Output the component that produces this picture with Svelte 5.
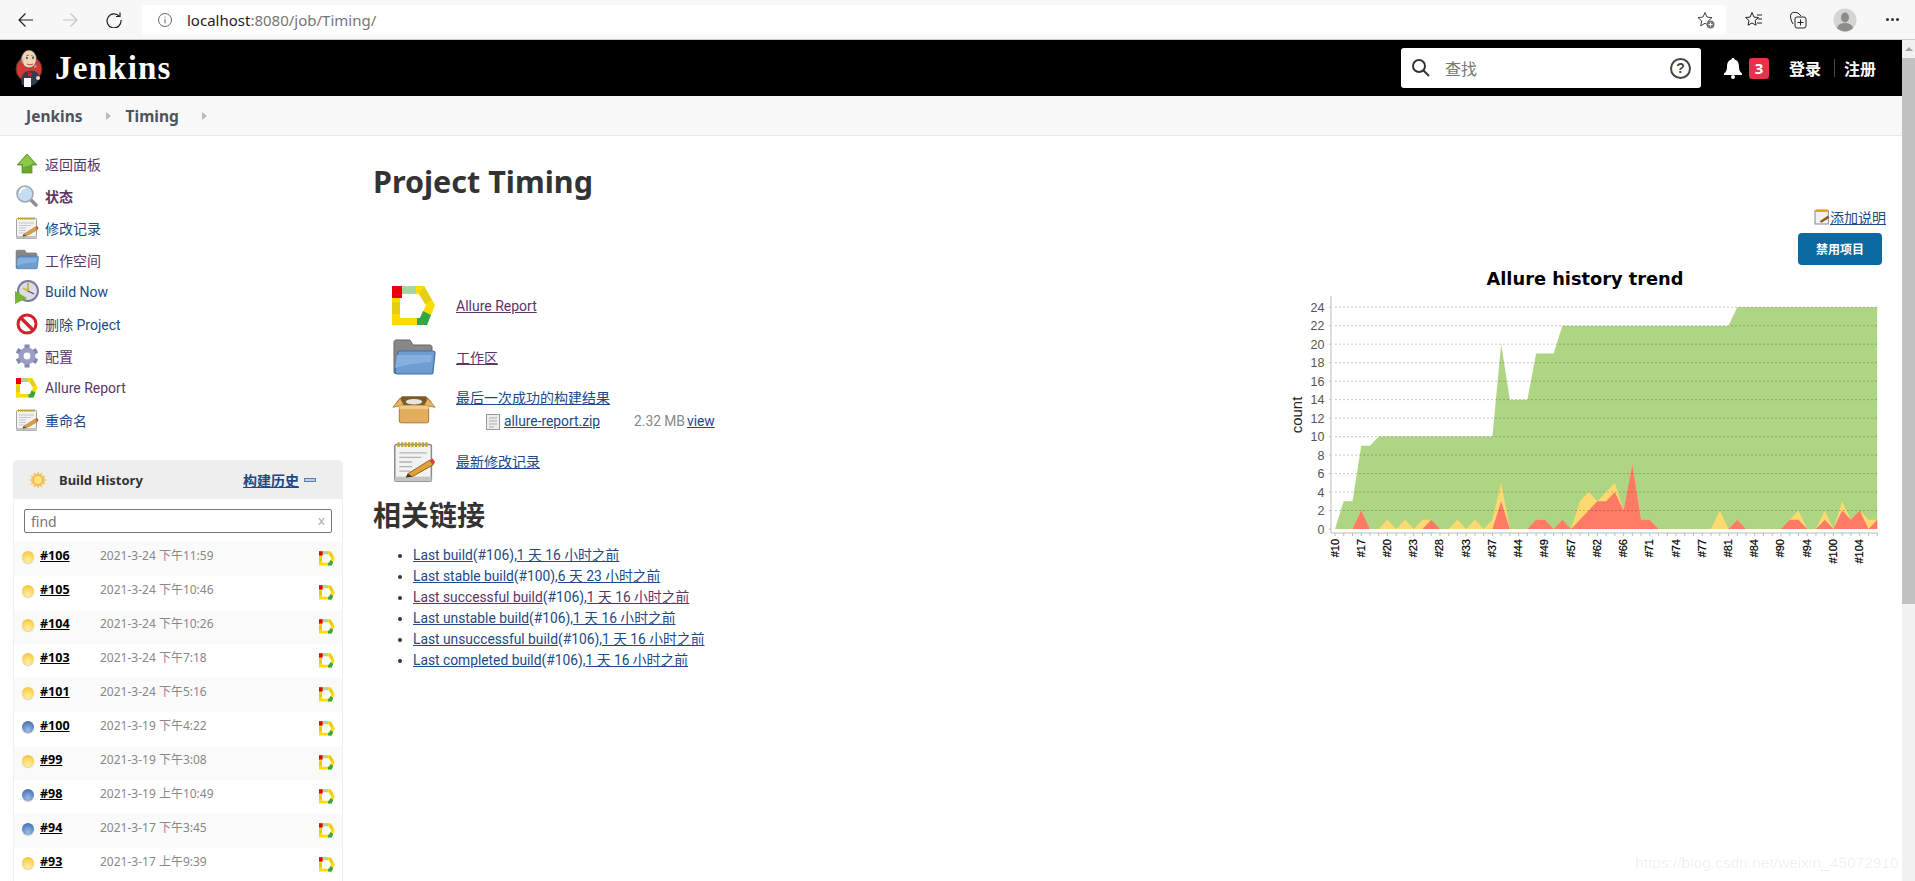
<script>
  const tasks = [
    { icon: "up", label: "返回面板", visited: true },
    { icon: "search", label: "状态", visited: true, bold: true },
    { icon: "notes", label: "修改记录" },
    { icon: "folder", label: "工作空间", visited: true },
    { icon: "clock", label: "Build Now" },
    { icon: "stop", label: "删除 Project" },
    { icon: "gear", label: "配置", visited: true },
    { icon: "allure", label: "Allure Report", visited: true },
    { icon: "notes", label: "重命名" },
  ];

  const builds = [
    ["#106", "2021-3-24 下午11:59", "yellow"],
    ["#105", "2021-3-24 下午10:46", "yellow"],
    ["#104", "2021-3-24 下午10:26", "yellow"],
    ["#103", "2021-3-24 下午7:18", "yellow"],
    ["#101", "2021-3-24 下午5:16", "yellow"],
    ["#100", "2021-3-19 下午4:22", "blue"],
    ["#99", "2021-3-19 下午3:08", "yellow"],
    ["#98", "2021-3-19 上午10:49", "blue"],
    ["#94", "2021-3-17 下午3:45", "blue"],
    ["#93", "2021-3-17 上午9:39", "yellow"],
  ];

  const permalinks = [
    ["Last build", "(#106),", "1 天 16 小时之前"],
    ["Last stable build", "(#100),", "6 天 23 小时之前"],
    ["Last successful build", "(#106),", "1 天 16 小时之前", true],
    ["Last unstable build", "(#106),", "1 天 16 小时之前"],
    ["Last unsuccessful build", "(#106),", "1 天 16 小时之前"],
    ["Last completed build", "(#106),", "1 天 16 小时之前"],
  ];

  // trend chart data, one value per build
  const total = [0, 3, 3, 9, 9, 10, 10, 10, 10, 10, 10, 10, 10, 10, 10, 10, 10, 10, 10, 20, 14, 14, 14, 19, 19, 19, 22, 22, 22, 22, 22, 22, 22, 22, 22, 22, 22, 22, 22, 22, 22, 22, 22, 22, 22, 22, 24, 24, 24, 24, 24, 24, 24, 24, 24, 24, 24, 24, 24, 24, 24, 24, 24];
  const broken = [0, 0, 0, 2, 0, 0, 1, 0, 1, 0, 1, 1, 0, 0, 1, 0, 1, 0, 1, 5, 0, 0, 0, 1, 1, 0, 1, 0, 3, 4, 3, 4, 5, 2, 7, 1, 1, 0, 0, 0, 0, 0, 0, 0, 2, 0, 1, 0, 0, 0, 0, 0, 1, 2, 0, 0, 2, 0, 3, 1, 2, 1, 1];
  const failed = [0, 0, 0, 2, 0, 0, 0, 0, 0, 0, 0, 1, 0, 0, 0, 0, 0, 0, 0, 3, 0, 0, 0, 1, 1, 0, 1, 0, 1, 2, 3, 3, 4, 2, 7, 1, 1, 0, 0, 0, 0, 0, 0, 0, 0, 0, 1, 0, 0, 0, 0, 0, 1, 1, 0, 0, 1, 0, 2, 1, 2, 0, 1];
  const xLabels = ["#10", "#17", "#20", "#23", "#28", "#33", "#37", "#44", "#49", "#57", "#62", "#66", "#71", "#74", "#77", "#81", "#84", "#90", "#94", "#100", "#104"];
  const levels = [24, 22, 20, 18, 16, 14, 12, 10, 8, 6, 4, 2, 0];

  const px = (i) => 1335 + i * 8.745;
  const py = (v) => 529 - v * 9.24;
  const area = (values) =>
    `M${px(0)} ${py(0)} ` + values.map((v, i) => `L${px(i)} ${py(v)}`).join(" ") + ` L${px(62)} ${py(0)} Z`;
</script>

{#snippet allure(w, h)}
  <svg width={w} height={h} viewBox="0 0 44 40" class="ic">
    <path d="M0 0H32L43 19 35 39H0Z M8 8V32H28L34 19 27 8Z" fill="#ffdc00" fill-rule="evenodd" />
    <path d="M0 16H8V28H0z" fill="#e6cd10" />
    <path d="M27 8L32 0 40 14 33 18z" fill="#e6cd18" />
    <path d="M10 0H24V8H10z" fill="#a9d6a0" />
    <path d="M0 0H10V12H0z" fill="#e8000f" />
    <path d="M25 39V32H28L31 25 39 29 35 39z" fill="#33a64a" />
  </svg>
{/snippet}

{#snippet notes(w, h)}
  <svg width={w} height={h} viewBox="0 0 48 48" class="ic">
    <rect x="3" y="5" width="40" height="40" rx="2" fill="#f2f2f2" stroke="#8a8a8a" stroke-width="1.6" />
    <rect x="3" y="40" width="40" height="5" fill="#c4c4c4" />
    <path d="M6 5h34" stroke="#c5a520" stroke-width="5" stroke-dasharray="2.4 1.4" />
    <path d="M8 14h30M8 19h24M8 24h14M8 29h14M8 34h12" stroke="#b4b4b4" stroke-width="1.4" />
    <path d="M17 37l24-15 4 5-23 13z" fill="#e0a03a" stroke="#8a5c14" stroke-width="1" />
    <path d="M41 22l3-2 3 4-2 3z" fill="#d8443a" />
    <path d="M17 37l5 3-7 1z" fill="#3a3020" />
  </svg>
{/snippet}

{#snippet folder(w, h)}
  <svg width={w} height={h} viewBox="0 0 44 38" class="ic">
    <path d="M2 34V3c0-1 1-2 2-2h14l3 5h17c1 0 2 1 2 2v6H10L6 34z" fill="#888" stroke="#666" />
    <path d="M3 33L6 12h35c1 0 2 1 2 2l-2 19c0 1-1 2-2 2H5c-1 0-2-1-2-2z" fill="#6f9dd2" stroke="#3d6ea6" stroke-width="1.2" />
    <path d="M5 16h35l-1 7c-12 1-24 2-36 6z" fill="#86b0de" />
  </svg>
{/snippet}

{#snippet box(w, h)}
  <svg width={w} height={h} viewBox="0 0 48 34" class="ic">
    <path d="M8 12h32l3-4-6-6H11L5 8z" fill="#7d5a2a" />
    <ellipse cx="24" cy="8" rx="9" ry="3" fill="#e6e6e0" />
    <path d="M1 14L9 4 13 12zM47 14L39 4l-4 8z" fill="#e8b461" stroke="#9c6c26" stroke-width=".8" />
    <rect x="8" y="12" width="32" height="19" rx="2" fill="#e3ad60" stroke="#a2722a" />
    <rect x="8" y="12" width="32" height="4" fill="#f0cb8a" />
  </svg>
{/snippet}

{#snippet taskIcon(name)}
  {#if name === "up"}
    <svg width="24" height="24" viewBox="0 0 24 24" class="ic">
      <path d="M12 2L22 13h-5v8H7v-8H2z" fill="#6aa82e" stroke="#5b9626" stroke-width=".8" />
      <path d="M12 3L4 12h4v3c4-1 8-2 11-4z" fill="#8cc84a" />
    </svg>
  {:else if name === "search"}
    <svg width="24" height="24" viewBox="0 0 24 24" class="ic">
      <path d="M15 15l6 6" stroke="#8c8c8c" stroke-width="3.4" stroke-linecap="round" />
      <circle cx="10" cy="10" r="8" fill="#c4dcf4" stroke="#a4a8ae" stroke-width="1.6" />
      <path d="M5 9a5 5 0 0 1 5-5" stroke="#fff" stroke-width="2" fill="none" />
    </svg>
  {:else if name === "notes"}
    {@render notes(24, 24)}
  {:else if name === "folder"}
    {@render folder(24, 22)}
  {:else if name === "clock"}
    <svg width="24" height="24" viewBox="0 0 24 24" class="ic">
      <circle cx="13" cy="11" r="10" fill="#dcdce6" stroke="#7a7a9c" stroke-width="2" />
      <path d="M13 3v8l-5-3" stroke="#c9b64a" stroke-width="2" fill="none" />
      <path d="M13 11l6 3" stroke="#555" stroke-width="1.2" />
      <path d="M0 11l12 7L0 24z" fill="#79b530" />
    </svg>
  {:else if name === "stop"}
    <svg width="24" height="24" viewBox="0 0 24 24" class="ic">
      <circle cx="12" cy="12" r="9" fill="#fff" stroke="#d2232a" stroke-width="3" />
      <path d="M6 6l12 12" stroke="#d2232a" stroke-width="3.4" />
    </svg>
  {:else if name === "gear"}
    <svg width="24" height="24" viewBox="0 0 24 24" class="ic">
      {#each [0, 60, 120, 180, 240, 300] as a}
        <rect x="9.500" y="0.500" width="5" height="6" fill="#8287b0" transform="rotate({a} 12 12)" />
      {/each}
      <circle cx="12" cy="12" r="8.500" fill="#9a9ec4" />
      <circle cx="12" cy="12" r="3.400" fill="#fff" />
    </svg>
  {:else}
    {@render allure(22, 20)}
  {/if}
{/snippet}

<div class="page">
  <div class="chrome">
    <div class="nav">
      <svg width="16" height="16" viewBox="0 0 16 16" fill="none" stroke="#222" stroke-width="1.2"><path d="M15 8H1M7.500 1.500L1 8l6.500 6.500" /></svg>
      <svg width="16" height="16" viewBox="0 0 16 16" fill="none" stroke="#c4c4c4" stroke-width="1.2"><path d="M1 8h14M8.500 1.500L15 8l-6.500 6.500" /></svg>
      <svg width="16" height="16" viewBox="0 0 16 16" fill="none" stroke="#222" stroke-width="1.2"><path d="M13.500 4.500A7 7 0 1 0 15 8" /><path d="M10 4.500h4V.5" /></svg>
    </div>
    <div class="address">
      <svg width="16" height="16" viewBox="0 0 16 16" fill="none" stroke="#666"><circle cx="8" cy="8" r="6.500" /><path d="M8 7v4.500M8 4.500v1" /></svg>
      <span class="url"><b>localhost</b>:8080/job/Timing/</span>
      <svg class="addr-star" width="18" height="18" viewBox="0 0 18 18"><path d="M8 1.500l2 4.600 5 .5-3.700 3.300 1 4.900L8 12.300 3.700 14.800l1-4.900L1 6.600l5-.5z" fill="none" stroke="#444" /><circle cx="13.500" cy="13.500" r="4" fill="#777" /><path d="M11.500 13.500h4M13.500 11.500v4" stroke="#fff" /></svg>
    </div>
    <div class="tools">
      <svg width="18" height="18" viewBox="0 0 18 18" fill="none" stroke="#222"><path d="M7 1.500l2 4.600 4.500.4-3.400 3 1 4.700L7 12 3 14.200l1-4.700-3.400-3 4.500-.4z" /><path d="M12 4h5M13 8h4M12 12h5" /></svg>
      <svg width="18" height="18" viewBox="0 0 18 18" fill="none" stroke="#222"><path d="M4 13C1.500 9 1 5 2 3c1-2 4-2 7-1l3 3" /><rect x="6" y="6" width="11" height="11" rx="2" /><path d="M11.500 8.500v6M8.500 11.500h6" /></svg>
      <svg width="24" height="24" viewBox="0 0 24 24"><circle cx="12" cy="12" r="11.500" fill="#d4d4d0" /><ellipse cx="12" cy="9.500" rx="4" ry="5" fill="#8c8c88" /><path d="M4 20c1-4 5-5 8-5s7 1 8 5a11 11 0 0 1-16 0z" fill="#8c8c88" /></svg>
      <span class="dots"></span>
    </div>
  </div>

  <div class="viewport">
    <div class="content">
      <header class="head">
        <svg class="logo" width="28" height="38" viewBox="0 0 28 38">
          <circle cx="14" cy="20" r="13" fill="#d33833" stroke="#49312c" />
          <path d="M7 36c-2-7 0-13 7-14s10 3 11 7c-2 4-5 7-9 8z" fill="#2c3e50" />
          <path d="M13 23l4 1-1 4-3-1z" fill="#c22" />
          <ellipse cx="14" cy="10" rx="7.500" ry="9" fill="#f0d6b7" stroke="#49312c" stroke-width=".6" />
          <path d="M7 14c-1-3-1-5 0-7l2 8zM20 15l2 3-3 1z" fill="#aaa" />
          <circle cx="12" cy="9" r=".9" fill="#333" /><circle cx="18" cy="9" r=".9" fill="#333" />
          <path d="M11 7l3-1M16 6.500l3 1" stroke="#555" stroke-width=".7" />
          <path d="M12 15q3 2 6 0" stroke="#944" fill="none" stroke-width=".9" />
          <path d="M9 29h7v9H9z" fill="#fff" />
          <circle cx="23" cy="29" r="2" fill="#f0d6b7" />
        </svg>
        <span class="brand">Jenkins</span>
        <div class="head-right">
          <div class="searchbox">
            <svg width="20" height="20" viewBox="0 0 20 20" fill="none" stroke="#333" stroke-width="2"><circle cx="8" cy="8" r="6" /><path d="M12.500 12.500L18 18" /></svg>
            <span class="placeholder">查找</span>
            <span class="help">?</span>
          </div>
          <svg class="bell" width="18" height="22" viewBox="0 0 18 22"><path d="M9 1c1 0 1.500 .7 1.500 1.600C14 3.500 15 6.500 15 10c0 3 1 5 3 6.500V18H0v-1.500C2 15 3 13 3 10c0-3.500 1-6.500 4.500-7.400C7.500 1.700 8 1 9 1z" fill="#fff" /><circle cx="9" cy="20" r="2" fill="#fff" /></svg>
          <span class="badge">3</span>
          <a class="login">登录</a>
          <span class="sep"></span>
          <a class="login">注册</a>
        </div>
      </header>

      <nav class="crumbs">
        <span class="crumb">Jenkins</span>
        <span class="arrow"></span>
        <span class="crumb">Timing</span>
        <span class="arrow"></span>
      </nav>

      <div class="columns">
        <aside class="side">
          <ul class="tasks">
            {#each tasks as t}
              <li class="task">
                <span class="task-icon">{@render taskIcon(t.icon)}</span>
                <span class:visited={t.visited} class:bold={t.bold}>{t.label}</span>
              </li>
            {/each}
          </ul>

          <section class="history">
            <div class="history-head">
              <svg width="18" height="18" viewBox="0 0 18 18">
                <path d="M9 0l1.500 3 3-1.500-.5 3.500 3.500-.5-1.500 3 3 1.500-3 1.500 1.500 3-3.500-.5.5 3.500-3-1.500L9 18l-1.500-3-3 1.500.5-3.500-3.500.5 1.500-3L0 9l3-1.500L1.500 4.500 5 5l-.5-3.500 3 1.500z" fill="#fbc66a" />
                <circle cx="9" cy="9" r="4.600" fill="#ffe680" stroke="#eea93a" />
              </svg>
              <span class="history-title">Build History</span>
              <a class="trend">构建历史</a>
              <span class="minus"></span>
            </div>
            <div class="find">
              <div class="find-input">find<span class="clear">x</span></div>
            </div>
            {#each builds as b}
              <div class="build">
                <span class="ball {b[2]}"></span>
                <a class="num">{b[0]}</a>
                <span class="date">{b[1]}</span>
                <span class="build-icon">{@render allure(16, 15)}</span>
              </div>
            {/each}
          </section>
        </aside>

        <main class="main">
          <div class="summary">
            <h1>Project Timing</h1>
            <div class="main-links">
              <div class="mi">{@render allure(44, 40)}</div>
              <div class="ml"><a class="visited">Allure Report</a></div>
              <div class="mi">{@render folder(44, 38)}</div>
              <div class="ml"><a class="visited">工作区</a></div>
              <div class="mi">{@render box(48, 34)}</div>
              <div class="ml">
                <a>最后一次成功的构建结果</a>
                <div class="artifact">
                  <svg width="14" height="16" viewBox="0 0 14 16"><rect x=".5" y=".5" width="13" height="15" fill="#eee" stroke="#999" /><path d="M3 4h8M3 7h8M3 10h8M3 13h5" stroke="#aaa" /></svg>
                  <a class="zip">allure-report.zip</a>
                  <span class="size">2.32 MB</span>
                  <a>view</a>
                </div>
              </div>
              <div class="mi">{@render notes(44, 44)}</div>
              <div class="ml"><a>最新修改记录</a></div>
            </div>
            <h2>相关链接</h2>
            <ul class="perma">
              {#each permalinks as p}
                <li><a class:visited={p[3]}>{p[0]}</a><span class="plain" class:visited={p[3]}>{p[1]}</span><a class:visited={p[3]}>{p[2]}</a></li>
              {/each}
            </ul>
          </div>

          <div class="right">
            <div class="describe">
              <svg width="16" height="16" viewBox="0 0 48 48"><rect x="3" y="5" width="40" height="40" fill="#f2f2f2" stroke="#888" stroke-width="3" /><path d="M6 5h34" stroke="#e0a818" stroke-width="8" /><path d="M17 37l24-17 6 6-25 15z" fill="#8a5c14" /></svg>
              <a>添加说明</a>
            </div>
            <button class="disable">禁用项目</button>
            <svg class="chart" width="620" height="300" viewBox="1270 268 620 300">
              <text x="1585" y="285" class="chart-title" text-anchor="middle">Allure history trend</text>
              <path d={area(total)} fill="#aed582" />
              <path d={area(broken)} fill="#ffd970" />
              <path d={area(failed)} fill="#fd7b65" />
              <path d="M1331 296V533H1878" fill="none" stroke="#bbb" />
              {#each levels as v}
                {#if v}
                  <path d="M1335 {py(v)}H1877" class="grid" />
                {/if}
                <path d="M1329 {py(v)}H1331" stroke="#bbb" />
                <text x="1324.500" y={py(v) + 4.500} class="y-label" text-anchor="end">{v}</text>
              {/each}
              {#each total as _, i}
                <path d="M{px(i)} 533v3" stroke="#bbb" />
              {/each}
              {#each xLabels as l, i}
                <text x={px(i * 3) + 3.500} y="539" class="x-label" text-anchor="end" transform="rotate(-90 {px(i * 3) + 3.500} 539)">{l}</text>
              {/each}
              <text x="1302" y="415" class="count" text-anchor="middle" transform="rotate(-90 1302 415)">count</text>
            </svg>
          </div>
        </main>
      </div>
    </div>

    <div class="scrollbar">
      <span class="up"></span>
      <span class="thumb"></span>
    </div>
  </div>

  <span class="watermark">https://blog.csdn.net/weixin_45072910</span>
</div>

<style>
  :global(body) {
    margin: 0;
    background: #fff;
  }

  .page {
    position: relative;
    width: 1915px;
    height: 881px;
    overflow: hidden;
    font-family: "Noto Sans", "Noto Sans CJK SC", sans-serif;
    font-size: 13px;
    color: #333;
  }

  a {
    color: #204a87;
    text-decoration: underline;
  }

  .visited,
  a.visited {
    color: #5c3566;
  }

  .ic {
    display: block;
  }

  /* browser bar */
  .chrome {
    height: 39px;
    background: #f7f7f7;
    border-bottom: 1px solid #ccc;
    display: flex;
    align-items: center;
  }

  .nav {
    width: 142px;
    padding-left: 18px;
    box-sizing: border-box;
    display: flex;
    gap: 28px;
  }

  .address {
    width: 1584px;
    height: 30px;
    background: #fff;
    border-radius: 4px;
    display: flex;
    align-items: center;
    padding-left: 15px;
    box-sizing: border-box;
  }

  .url {
    margin-left: 14px;
    font-size: 15px;
    color: #767676;
  }

  .url b {
    font-weight: 400;
    color: #222;
  }

  .addr-star {
    margin-left: auto;
    margin-right: 11px;
  }

  .tools {
    flex: 1;
    display: flex;
    align-items: center;
    padding-left: 19px;
    gap: 26px;
  }

  .dots {
    width: 3px;
    height: 3px;
    margin-left: 8px;
    border-radius: 50%;
    background: #333;
    box-shadow: 5px 0 #333, -5px 0 #333;
  }

  /* page */
  .viewport {
    display: flex;
    height: 842px;
  }

  .content {
    flex: 1;
    min-width: 0;
  }

  .scrollbar {
    width: 13px;
    background: #f1f1f1;
    display: flex;
    flex-direction: column;
    align-items: center;
  }

  .up {
    margin-top: 7px;
    border: 4px solid transparent;
    border-top: 0;
    border-bottom: 4px solid #a3a3a3;
  }

  .thumb {
    width: 100%;
    margin-top: 7px;
    height: 546px;
    background: #c1c1c1;
  }

  .head {
    height: 56px;
    background: #000;
    display: flex;
    align-items: center;
    padding-left: 15px;
    padding-right: 26px;
  }

  .brand {
    margin-left: 12px;
    font-family: "Liberation Serif", serif;
    font-weight: 700;
    font-size: 33px;
    color: #fff;
    letter-spacing: 1.2px;
  }

  .head-right {
    margin-left: auto;
    display: flex;
    align-items: center;
  }

  .searchbox {
    width: 300px;
    height: 40px;
    box-sizing: border-box;
    background: #fff;
    border-radius: 3px;
    display: flex;
    align-items: center;
    padding: 0 10px 0 10px;
  }

  .placeholder {
    margin-left: 14px;
    font-size: 16px;
    color: #777;
  }

  .help {
    margin-left: auto;
    width: 17px;
    height: 17px;
    border: 2px solid #444;
    border-radius: 50%;
    text-align: center;
    font: 700 14px/17px "Liberation Sans", sans-serif;
    color: #444;
  }

  .bell {
    margin-left: 23px;
  }

  .badge {
    margin-left: 7px;
    width: 20px;
    height: 21px;
    background: #e6324b;
    border-radius: 3px;
    color: #fff;
    font-weight: 700;
    font-size: 15px;
    line-height: 21px;
    text-align: center;
  }

  .login {
    margin-left: 20px;
    font-size: 16px;
    font-weight: 700;
    color: #fff;
    text-decoration: none;
  }

  .sep {
    width: 1px;
    height: 18px;
    margin-left: 13px;
    margin-right: -11px;
    background: #444;
  }

  .crumbs {
    height: 39px;
    background: #f8f8f8;
    border-bottom: 1px solid #e8e8e8;
    display: flex;
    align-items: center;
    padding-left: 26px;
  }

  .crumb {
    font-size: 15.500px;
    font-weight: 700;
    color: #4d545d;
  }

  .arrow {
    margin: 0 15px 0 23px;
    border: 4px solid transparent;
    border-left: 5px solid #bbb;
    border-right: 0;
  }

  .columns {
    display: flex;
  }

  /* left side */
  .side {
    width: 360px;
    flex-shrink: 0;
    padding: 12px 0 0 13px;
    box-sizing: border-box;
  }

  .tasks {
    list-style: none;
    margin: 0;
    padding: 0;
  }

  .task {
    height: 32px;
    display: flex;
    align-items: center;
    font-family: Roboto, "Noto Sans CJK SC", sans-serif;
    font-size: 14px;
    color: #204a87;
  }

  .task-icon {
    width: 32px;
    display: flex;
    justify-content: center;
    padding-right: 4px;
    box-sizing: border-box;
  }

  .bold {
    font-weight: 700;
  }

  .history {
    width: 330px;
    margin-top: 24px;
    box-sizing: border-box;
    border: 1px solid #f0f0f0;
    border-top: 0;
    border-radius: 4px 4px 0 0;
  }

  .history-head {
    height: 39px;
    background: #eee;
    display: flex;
    align-items: center;
    padding-left: 15px;
    border-radius: 4px 4px 0 0;
  }

  .history-title {
    margin-left: 12px;
    font-weight: 700;
    font-size: 13px;
    color: #333;
  }

  .trend {
    margin-left: auto;
    font-size: 14px;
    font-weight: 700;
  }

  .minus {
    width: 10px;
    height: 2px;
    margin: 0 26px 0 5px;
    background: #b9d0ea;
    border: 1px solid #5a7fb0;
  }

  .find {
    height: 43px;
    padding: 10px 10px 0;
    box-sizing: border-box;
  }

  .find-input {
    height: 24px;
    box-sizing: border-box;
    border: 1px solid #767676;
    border-radius: 2px;
    padding: 0 6px;
    font-size: 14px;
    line-height: 24px;
    color: #777;
    display: flex;
    justify-content: space-between;
  }

  .clear {
    font-size: 13px;
    line-height: 20px;
    color: #aaa;
  }

  .build {
    height: 34px;
    display: flex;
    align-items: flex-start;
    padding: 4px 7px 0 8px;
    box-sizing: border-box;
    line-height: 20px;
  }

  .build:nth-of-type(odd) {
    background: #fafafa;
  }

  .ball {
    width: 12px;
    height: 12px;
    margin-top: 5px;
    border-radius: 50%;
    flex-shrink: 0;
    box-shadow: 0 1px 1px #ccc;
  }

  .ball.yellow {
    background: radial-gradient(circle at 50% 75%, #fff0a0, #fcd45a 55%, #eeb63c);
  }

  .ball.blue {
    background: radial-gradient(circle at 50% 75%, #9dbde6, #5f88c4 55%, #33609e);
  }

  .num {
    width: 60px;
    margin-left: 6px;
    font-size: 12.500px;
    font-weight: 700;
    color: #000;
    flex-shrink: 0;
    text-decoration-skip-ink: none;
  }

  .date {
    font-size: 12px;
    color: #888;
  }

  .build-icon {
    margin-left: auto;
    margin-top: 5px;
  }

  /* main */
  .main {
    flex: 1;
    min-width: 0;
    display: flex;
    justify-content: space-between;
    padding: 0 12px 0 13px;
  }

  h1 {
    margin: 25px 0 82px;
    font-size: 30.500px;
    line-height: 40px;
    font-weight: 700;
    color: #333;
  }

  h2 {
    margin: 12px 0;
    font-size: 28px;
    line-height: 36px;
    font-weight: 700;
    color: #333;
  }

  .main-links {
    margin-left: 19px;
    display: grid;
    grid-template-columns: 44px auto;
    grid-auto-rows: 46px;
    column-gap: 20px;
    row-gap: 6px;
    align-items: center;
    font-family: Roboto, "Noto Sans CJK SC", sans-serif;
    font-size: 14px;
  }

  .mi {
    display: flex;
    justify-content: center;
  }

  .ml {
    line-height: 23px;
  }

  .artifact {
    display: flex;
    align-items: center;
    padding-left: 30px;
    font-size: 13.800px;
  }

  .zip {
    margin-left: 4px;
    width: 130px;
  }

  .size {
    margin-right: 2px;
    color: #888;
  }

  .perma {
    margin: 0;
    padding-left: 40px;
    font-family: Roboto, "Noto Sans CJK SC", sans-serif;
    font-size: 13.800px;
    line-height: 21px;
    color: #333;
  }

  .plain {
    color: #204a87;
  }

  .right {
    padding-top: 72px;
    display: flex;
    flex-direction: column;
    align-items: flex-end;
  }

  .describe {
    height: 18px;
    margin-right: 4px;
    display: flex;
    align-items: center;
    gap: 0;
    font-size: 14px;
  }

  .disable {
    width: 84px;
    height: 32px;
    margin: 7px 8px 3px 0;
    padding: 0;
    border: 0;
    border-radius: 4px;
    background: #0b6aa2;
    color: #fff;
    font-family: inherit;
    font-weight: 700;
    font-size: 12px;
  }

  .chart {
    display: block;
  }

  .chart-title {
    font: 700 17.800px "DejaVu Sans", sans-serif;
    fill: #000;
  }

  .grid {
    stroke: rgba(0, 0, 0, 0.22);
    stroke-dasharray: 2 2;
  }

  .y-label {
    font: 12.500px "Liberation Sans", sans-serif;
    fill: #555;
  }

  .x-label {
    font: 11px "Liberation Sans", sans-serif;
    fill: #000;
    stroke: #000;
    stroke-width: 0.2px;
  }

  .count {
    font: 15px "Liberation Sans", sans-serif;
    fill: #222;
  }

  .watermark {
    position: absolute;
    left: 1635px;
    top: 854px;
    font: 15.500px "Liberation Sans", sans-serif;
    color: rgba(0, 0, 0, 0.07);
    white-space: nowrap;
  }
</style>
